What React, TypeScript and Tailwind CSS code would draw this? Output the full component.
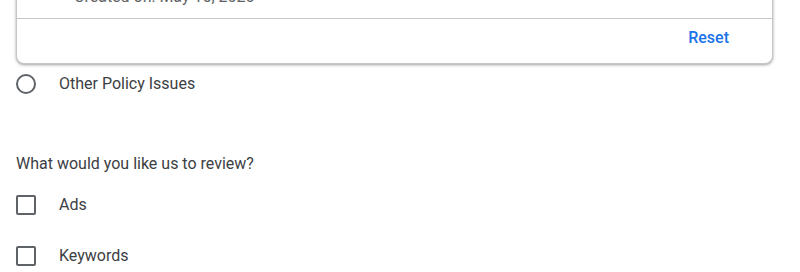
export default function App() {
  return (
    <div
      className="w-[800px] h-[272px] overflow-hidden bg-white pl-4 text-[16px] text-[#3c4043]"
      style={{ fontFamily: "Roboto, 'Noto Sans', sans-serif" }}
    >
      {/* Expanded policy card (scrolled, top cut off) */}
      <div className="-mt-[35px] w-[757px] rounded-b-lg border border-t-0 border-[#c4c7c5] bg-white shadow-[0_1px_2px_rgba(60,64,67,0.3),0_1px_3px_1px_rgba(60,64,67,0.15)]">
        <div className="pl-[57px] pt-[20px] pb-[9px] text-[#5f6368] leading-6">
          Created on: May 15, 2020
        </div>
        <div className="border-t border-[#c4c7c5] flex h-[45px] items-center justify-end pr-[43px] pb-[6px]">
          <button className="text-[16px] font-medium text-[#1a73e8]">Reset</button>
        </div>
      </div>

      {/* Other Policy Issues radio */}
      <label className="flex items-center h-[40px]">
        <span className="w-5 h-5 rounded-full border-2 border-[#5f6368]" />
        <span className="ml-[23px]">Other Policy Issues</span>
      </label>

      <p className="mt-[48px] leading-6">What would you like us to review?</p>

      <div className="mt-[19px] flex flex-col gap-[31px]">
        <Check label="Ads" />
        <Check label="Keywords" />
      </div>
    </div>
  );
}

function Check({ label }: { label: string }) {
  return (
    <label className="flex items-center h-5">
      <span className="w-5 h-5 rounded-[2px] border-2 border-[#5f6368]" />
      <span className="ml-[23px]">{label}</span>
    </label>
  );
}
